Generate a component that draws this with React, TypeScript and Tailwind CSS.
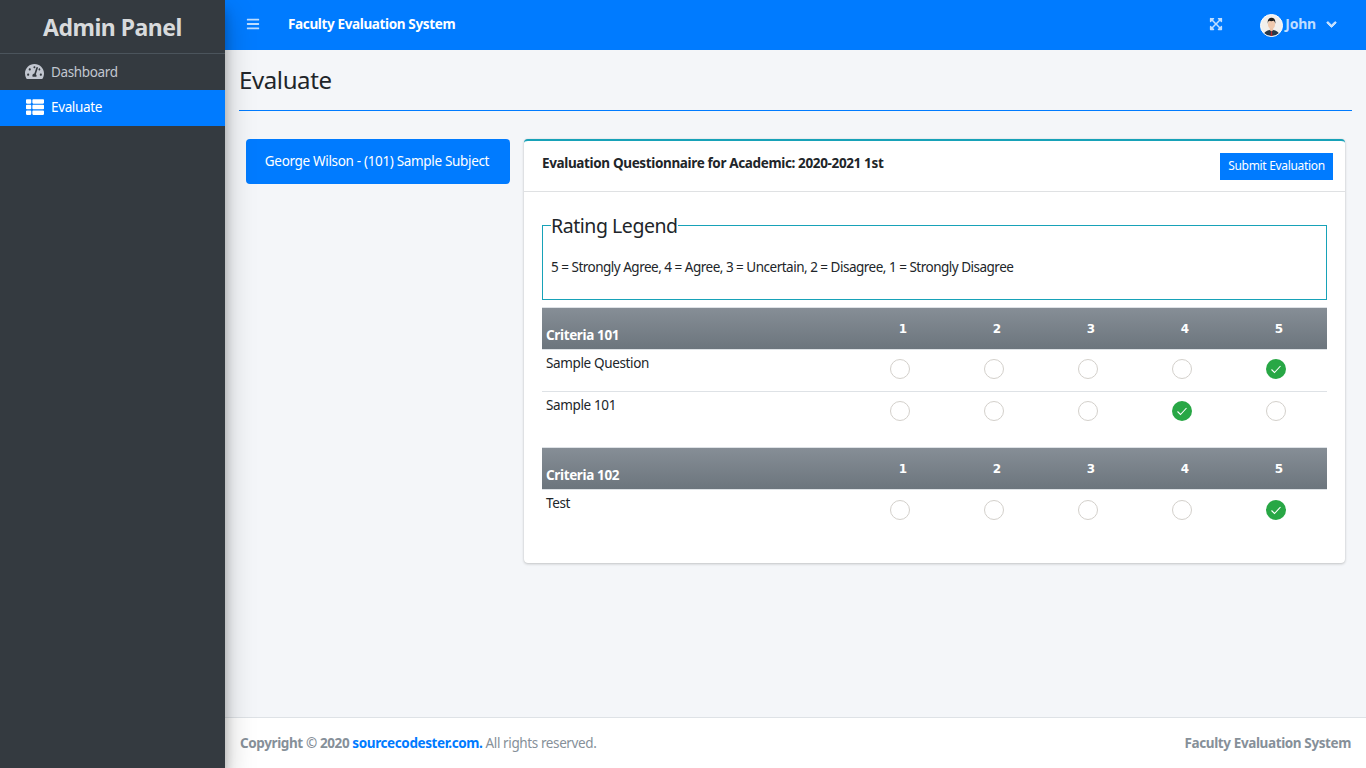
import { FaBars, FaChevronDown, FaExpandArrowsAlt, FaTachometerAlt, FaThList } from "react-icons/fa";

const SANS = "font-['Noto_Sans','Open_Sans',sans-serif]";

type Question = { text: string; picked: number };

const SECTIONS: { title: string; questions: Question[]; pad: string; dot: string }[] = [
  {
    title: "Criteria 101",
    pad: "pb-[13px]",
    dot: "pt-[9px]",
    questions: [
      { text: "Sample Question", picked: 5 },
      { text: "Sample 101", picked: 4 },
    ],
  },
  {
    title: "Criteria 102",
    pad: "",
    dot: "pt-[10px]",
    questions: [{ text: "Test", picked: 5 }],
  },
];

function Avatar() {
  return (
    <svg viewBox="0 0 24 24" className="h-[23px] w-[23px] rounded-full border border-white bg-[#f2efec]">
      <path d="M3 24c0-5 4-7 9-7s9 2 9 7z" fill="#27394a" />
      <path d="M10 17l2 2 2-2v-3h-4z" fill="#eec3a6" />
      <path d="M11.4 18.5h1.2l.4 5.5h-2z" fill="#b5282e" />
      <ellipse cx="12" cy="10.5" rx="4" ry="5" fill="#f0c9ae" />
      <path d="M7.7 10c-.5-5 2-6.8 4.5-6.8S17 5 16.300 10c-.5-2-1-3-2-3.300-1.500.5-3.500.5-5 0-1 .5-1.300 1.500-1.600 3.300z" fill="#1c1c1c" />
    </svg>
  );
}

function Rating({ on }: { on: boolean }) {
  if (!on) return <span className="block h-5 w-5 rounded-full border border-[#d3d0cb] bg-white" />;
  return (
    <span className="flex h-5 w-5 items-center justify-center rounded-full bg-[#28a745]">
      <svg viewBox="0 0 12 12" className="h-3 w-3" fill="none" stroke="#fff" strokeWidth="1.100">
        <path d="M1.500 6.500l3 3 6-6.500" />
      </svg>
    </span>
  );
}

function Criteria({ title, questions, pad, dot }: { title: string; questions: Question[]; pad: string; dot: string }) {
  return (
    <section className={pad}>
      <div className="grid h-[43px] grid-cols-[311px_repeat(5,94px)] border-y border-[#dee2e6] bg-gradient-to-b from-[#868e96] to-[#6c757d] font-bold text-white">
        <div className="self-end pb-[4px] pl-[4px] text-[13.500px]">{title}</div>
        {[1, 2, 3, 4, 5].map((n) => (
          <div key={n} className="pl-[6px] pt-[12px] text-center font-['DejaVu_Sans',sans-serif] text-[12px] tracking-normal">{n}</div>
        ))}
      </div>
      {questions.map((q, i) => (
        <div
          key={q.text}
          className={`grid h-[42px] grid-cols-[311px_repeat(5,94px)] ${i < questions.length - 1 ? "border-b border-[#dee2e6]" : ""}`}
        >
          <div className="pl-[4px] pt-[3px] text-[#212529]">{q.text}</div>
          {[1, 2, 3, 4, 5].map((n) => (
            <div key={n} className={`flex justify-center ${dot}`}>
              <Rating on={q.picked === n} />
            </div>
          ))}
        </div>
      ))}
    </section>
  );
}

export default function App() {
  return (
    <div className={`flex h-[768px] w-[1366px] overflow-hidden bg-[#f4f6f9] text-[13.500px] tracking-[-0.36px] ${SANS}`}>
      <aside className="z-10 h-full w-[225px] shrink-0 bg-[#343a40] shadow-[0_14px_28px_rgba(0,0,0,0.25),0_10px_10px_rgba(0,0,0,0.22)]">
        <div className="flex h-[54px] items-center justify-center border-b border-[#4b545c] pt-[2px] text-[23px] font-bold tracking-[-0.5px] text-[#d8dadc]">
          Admin Panel
        </div>
        <nav>
          <a className="flex h-[36px] items-center gap-[7px] pb-[2px] pl-[25px] text-[#c2c7d0]">
            <FaTachometerAlt className="h-[19px] w-[19px]" />
            <span className="pt-[2px]">Dashboard</span>
          </a>
          <a className="flex h-[36px] items-center gap-[7px] bg-[#007bff] pb-[3px] pl-[26px] text-white">
            <FaThList className="h-[18px] w-[18px]" />
            <span className="pt-[2px]">Evaluate</span>
          </a>
        </nav>
      </aside>

      <div className="flex min-w-0 flex-1 flex-col">
        <header className="flex h-[50px] shrink-0 items-center bg-[#007bff] text-white">
          <FaBars className="mb-[2px] ml-[21px] h-[14px] w-[14px] text-white/75" />
          <span className="ml-[28px] pb-[1px] font-bold">Faculty Evaluation System</span>
          <FaExpandArrowsAlt className="mb-[2px] ml-auto h-[14px] w-[14px] text-white/75" />
          <span className="ml-[37px] flex items-center gap-[2px]">
            <Avatar />
            <span className="pb-[3px] text-[14px] font-bold tracking-[-0.2px] text-white/75">John</span>
          </span>
          <FaChevronDown className="mb-[2px] ml-[10px] mr-[29px] h-[11px] w-[11px] text-white/75" stroke="currentColor" strokeWidth={40} />
        </header>

        <main className="flex-1 px-[14px]">
          <h1 className="flex h-[60px] items-center text-[24px] tracking-[-0.38px] text-[#212529]">Evaluate</h1>
          <hr className="border-t border-[#007bff]" />
          <div className="flex items-start gap-[14px] pl-[7px] pt-[28px]">
            <div className="flex h-[45px] w-[264px] items-center justify-center rounded-[4px] bg-[#007bff] pr-[2px] tracking-[-0.33px] text-white">
              George Wilson - (101) Sample Subject
            </div>
            <div className="h-[424px] w-[821px] rounded-[4px] border-t-2 border-[#17a2b8] bg-white shadow-[0_0_1px_rgba(0,0,0,0.125),0_1px_3px_rgba(0,0,0,0.2)]">
              <div className="flex h-[51px] border-b border-[#dfe1e3] pl-[18px] pr-[12px]">
                <span className="pt-[12px] font-bold text-[#212529]">Evaluation Questionnaire for Academic: 2020-2021 1st</span>
                <button className="ml-auto mt-[12px] h-[27px] w-[113px] bg-[#007bff] pb-[1px] text-[12px] tracking-[-0.32px] text-white">Submit Evaluation</button>
              </div>
              <div className="px-[18px] pt-[19px]">
                <fieldset className="h-[89px] w-[785px] border border-[#17a2b8] px-[8px]">
                  <legend className="text-[19.500px] leading-[28px] tracking-[-0.45px] text-[#212529]">
                    <span className="block translate-y-px">Rating Legend</span>
                  </legend>
                  <p className="pt-[18px] tracking-[-0.5px] text-[#212529]">5 = Strongly Agree, 4 = Agree, 3 = Uncertain, 2 = Disagree, 1 = Strongly Disagree</p>
                </fieldset>
                <div className="pt-[7px]">
                  {SECTIONS.map((s) => (
                    <Criteria key={s.title} {...s} />
                  ))}
                </div>
              </div>
            </div>
          </div>
        </main>

        <footer className="flex h-[51px] shrink-0 items-center justify-between border-t border-[#dee2e6] bg-white px-[15px] tracking-[-0.39px] text-[#869099]">
          <span>
            <b>Copyright © 2020 <a className="text-[#007bff]">sourcecodester.com.</a></b> All rights reserved.
          </span>
          <b>Faculty Evaluation System</b>
        </footer>
      </div>
    </div>
  );
}
